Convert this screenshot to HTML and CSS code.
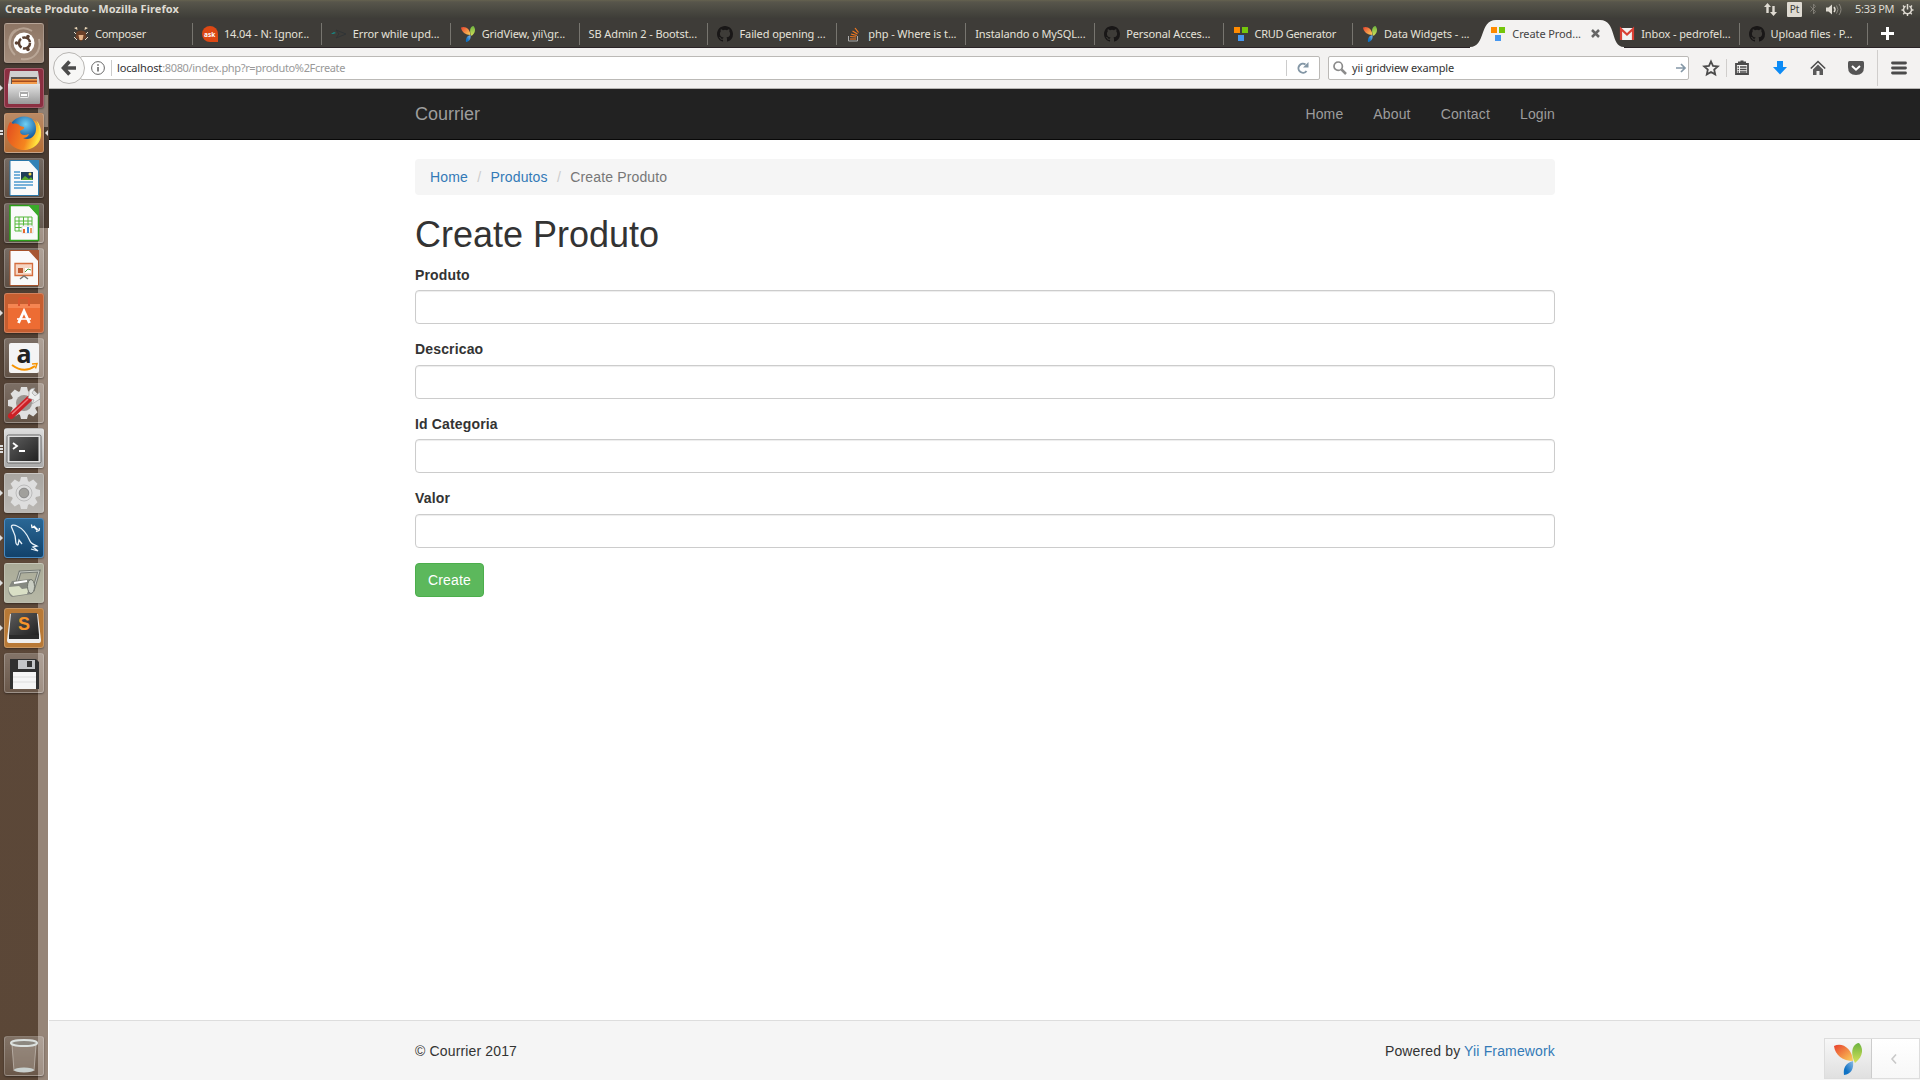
FILE: index.html
```html
<!DOCTYPE html>
<html lang="en">
<head>
<meta charset="utf-8">
<title>Create Produto</title>
<link rel="stylesheet" href="styles.css">
</head>
<body>
<svg class="defs" width="0" height="0">
  <defs>
    <linearGradient id="orange" x1="0" y1="0" x2="1" y2="1"><stop offset="0" stop-color="#e8402d"/><stop offset="1" stop-color="#fbd15b"/></linearGradient>
    <linearGradient id="green" x1="0" y1="0" x2="0" y2="1"><stop offset="0" stop-color="#6cb33f"/><stop offset="1" stop-color="#d6e25a"/></linearGradient>
    <linearGradient id="blue" x1="1" y1="0" x2="0" y2="1"><stop offset="0" stop-color="#8ebbe6"/><stop offset=".7" stop-color="#0f72c4"/></linearGradient>
    <linearGradient id="steel" x1="0" y1="0" x2="0" y2="1"><stop offset="0" stop-color="#e4e4e4"/><stop offset="1" stop-color="#999"/></linearGradient>
    <linearGradient id="screen" x1="0" y1="0" x2="1" y2="1"><stop offset="0" stop-color="#5d5d5d"/><stop offset="1" stop-color="#222"/></linearGradient>
    <radialGradient id="globe" cx=".55" cy=".25"><stop offset="0" stop-color="#6fd0f4"/><stop offset="1" stop-color="#0c4f97"/></radialGradient>
    <linearGradient id="fox" x1="0" y1="0" x2="1" y2=".3"><stop offset="0" stop-color="#e1481f"/><stop offset=".7" stop-color="#f5861f"/><stop offset="1" stop-color="#ffe13c"/></linearGradient>
  </defs>
  <symbol id="yii" viewBox="0 0 28 32">
    <path d="M0 3C8-1 18 5 19 18 9 18 1 12 0 3z" fill="url(#orange)"/>
    <path d="M21 20C16 10 18 1 25 0c5 6 4 14-4 20z" fill="url(#green)"/>
    <path d="M19 18c-8 2-10 8-9 14 7-1 10-6 9-14z" fill="url(#blue)"/>
  </symbol>
  <symbol id="github" viewBox="0 0 16 16"><path fill="#191717" d="M8 0C3.58 0 0 3.58 0 8c0 3.54 2.29 6.53 5.47 7.59.4.07.55-.17.55-.38 0-.19-.01-.82-.01-1.49-2.01.37-2.53-.49-2.69-.94-.09-.23-.48-.94-.82-1.13-.28-.15-.68-.52-.01-.53.63-.01 1.08.58 1.23.82.72 1.21 1.87.87 2.33.66.07-.52.28-.87.51-1.07-1.78-.2-3.64-.89-3.64-3.95 0-.87.31-1.59.82-2.15-.08-.2-.36-1.02.08-2.12 0 0 .67-.21 2.2.82a7.6 7.6 0 0 1 4 0c1.53-1.04 2.2-.82 2.2-.82.44 1.1.16 1.92.08 2.12.51.56.82 1.27.82 2.15 0 3.07-1.87 3.75-3.65 3.95.29.25.54.73.54 1.48 0 1.07-.01 1.93-.01 2.2 0 .21.15.46.55.38A8 8 0 0 0 16 8c0-4.42-3.58-8-8-8z"/></symbol>
  <symbol id="squares" viewBox="0 0 14 14"><path d="M0 0h6v6H0z" fill="#ff8a00"/><path d="M8 0h6v6H8z" fill="#74c60b"/><path d="M4 8h6v6H4z" fill="#4597f0"/></symbol>
  <symbol id="gear" viewBox="0 0 40 40">
    <circle cx="20" cy="20" r="12.500"/>
    <path d="M17 4h6l1.500 6h-9zM17 36h6l1.500-6h-9zM4 17v6l6 1.500v-9zM36 17v6l-6 1.500v-9zM6.500 10.800l4.300-4.300 5.200 3.200-6.300 6.300zM33.500 10.800l-4.300-4.300-5.200 3.200 6.300 6.300zM6.500 29.200l4.300 4.300 5.200-3.200-6.300-6.300zM33.500 29.200l-4.300 4.300-5.200-3.200 6.300-6.300z"/>
  </symbol>
</svg>

<header class="panel">
  <span class="panel-title">Create Produto - Mozilla Firefox</span>
  <div class="indicators">
    <svg width="13" height="13" viewBox="0 0 13 13" fill="#dfdbd2"><path d="M3.500 0L7 4H4.700v6H2.300V4H0zM9.500 13L13 9h-2.300V3H8.300v6H6z"/></svg>
    <span class="lang">Pt</span>
    <svg class="bt" width="7" height="12" viewBox="0 0 7 12" fill="none" stroke="#7e7b73"><path d="M.5 3.500l5 5-2 2.500V1l2 2.500-5 5"/></svg>
    <svg class="vol" width="16" height="13" viewBox="0 0 16 13"><path d="M0 4.500h2.500L6 1.500v10l-3.500-3H0z" fill="#dfdbd2"/><path d="M8 4q2 2.500 0 5" fill="none" stroke="#dfdbd2" stroke-width="1.500"/><path d="M10.500 2.500q3 4 0 8M13 1q4 5.500 0 11" fill="none" stroke="#8b887f"/></svg>
    <span class="clock">5:33 PM</span>
    <svg width="13" height="13" viewBox="0 0 13 13" fill="none" stroke="#dfdbd2"><path d="M4.600 3.200a4 4 0 1 0 3.800 0" stroke-width="1.500"/><path d="M6.500 1v5.500" stroke-width="1.500"/><path d="M3.400 3.900L2 2.500M9.600 3.900L11 2.500M2.500 7H.5M10.500 7h2M3.600 9.800L2.200 11.200M9.400 9.800l1.400 1.400M6.500 11v2" stroke-width="1.400"/></svg>
  </div>
</header>

<div class="desktop">
<aside class="launcher">
  <div class="tile ubuntu"><svg viewBox="0 0 40 40"><path d="M6 23C4 9 17 1 28 8M35 16c3 13-6 22-18 20M11 32C1 22 6 10 12 7" fill="none" stroke="#cdbcae" stroke-width="2" opacity=".6"/><circle cx="20" cy="20" r="10.500" fill="#fff"/><circle cx="20.500" cy="20" r="5.500" fill="none" stroke="#5b4132" stroke-width="2.500" stroke-dasharray="10 1.500"/><g fill="#5b4132"><circle cx="12.500" cy="20" r="1.800"/><circle cx="24" cy="13.500" r="1.800"/><circle cx="24" cy="26.500" r="1.800"/></g></svg></div>
  <div class="tile files on"><svg viewBox="0 0 40 40"><path d="M6 3h28l2 14H4z" fill="#d0d0d0"/><path d="M7 9h26v8H7z" fill="#5c5550"/><path d="M8 11h25v6H8z" fill="#f39b4b"/><path d="M8 12.500h25v1.500H8z" fill="#a44b1d"/><path d="M4 16h32v19q0 1-1 1H5q-1 0-1-1z" fill="url(#steel)"/><rect x="15.500" y="23.500" width="9" height="6" rx="1" fill="#aaa" stroke="#eee"/><path d="M17 26h6v2h-6z" fill="#fff"/></svg></div>
  <div class="tile firefox on two current"><svg viewBox="0 0 40 40"><circle cx="20" cy="19" r="15.500" fill="url(#globe)"/><path d="M6 9c1 0 2 1 3 2 3-1 6 0 7 2l4 1c1 2-3 3-4 4 0 4 4 5 9 3-1 3-4 4-6 4 7 3 13-2 13-9 0-4-1-7-4-10 6 3 8 8 9 14 1 10-8 17-17 17S2 30 3 20c0-4 1-8 3-11z" fill="url(#fox)"/><path d="M32 7c4 7 5 16-1 23 8-4 8-16 1-23z" fill="#ffe24b"/></svg></div>
  <div class="tile"><svg viewBox="0 0 40 40"><path d="M6 2.500h20L34.500 12v25.500H6z" fill="#fafafa" stroke="#2b77a9"/><path d="M24 2h11v12z" fill="#3182b7"/><path d="M10 14h6M10 17h6M10 20h6M10 24h19M10 27h19M10 30h12" stroke="#4d9bd0" stroke-width="1.600"/><path d="M17 14h12v8H17z" fill="#203d58"/><path d="M17 22l4-4 4 3 2-2 2 3z" fill="#5aaa30"/><circle cx="26" cy="16" r="1.500" fill="#f5d547"/></svg></div>
  <div class="tile"><svg viewBox="0 0 40 40"><path d="M6 2.500h20L34.500 12v25.500H6z" fill="#fafafa" stroke="#2ba018" stroke-width="1.500"/><path d="M24 2h11v12z" fill="#3aa92a"/><path d="M11 14h17v14H11zM11 18h17M11 21h17M11 24.500h17M15 14v14M19.500 14v14M24 14v14" fill="none" stroke="#55b83b"/><path d="M18 23h11v7H18z" fill="#fff" stroke="#ddd"/><path d="M20 30v-4" stroke="#e8672f" stroke-width="2"/><path d="M24 30v-6" stroke="#3e8edb" stroke-width="2"/><path d="M27 30v-5" stroke="#e89a64" stroke-width="2"/></svg></div>
  <div class="tile"><svg viewBox="0 0 40 40"><path d="M6 2.500h20L34.500 12v25.500H6z" fill="#fafafa" stroke="#a5512a"/><path d="M24 2h11v12z" fill="#a75631"/><path d="M11 15.500h17.500v12H11z" fill="#f6d5c3" stroke="#d46d3d" stroke-width="1.300"/><path d="M14 20h5v5h-5z" fill="#bd5b33"/><path d="M21 20h6v5h-6z" fill="#fff"/><path d="M21 24l3-3 3 1" stroke="#4d9d3d" fill="none"/><path d="M16 31l4-3 4 3" fill="none" stroke="#777" stroke-width="1.500"/></svg></div>
  <div class="tile software on"><svg viewBox="0 0 40 40"><path d="M4 11h32v25H4z" fill="#ed6c33"/><path d="M4 11h32v4H4z" fill="#f58552"/><path d="M15 13V7q0-2 2-2h6q2 0 2 2v6" fill="none" stroke="#d9542e" stroke-width="2"/><path d="M14.500 30L20 18l5.500 12" fill="none" stroke="#fff" stroke-width="2.800"/><path d="M13 26h14" stroke="#fff" stroke-width="1.600"/></svg></div>
  <div class="tile"><svg viewBox="0 0 40 40"><rect x="5" y="5" width="30" height="30" rx="2" fill="#f4f4f4"/><text x="12.500" y="25" class="amazon-a">a</text><path d="M8 27q12 9 23 1" fill="none" stroke="#f79400" stroke-width="2"/><path d="M28 26l5-.5-1.500 5" fill="none" stroke="#f79400" stroke-width="1.500"/></svg></div>
  <div class="tile"><svg viewBox="0 0 40 40"><use href="#gear" fill="#e0e0e0"/><circle cx="20" cy="20" r="8" fill="#9b9591"/><path d="M7 33L25 16" stroke="#cb2026" stroke-width="6" stroke-linecap="round"/><path d="M8 31L24 16" stroke="#ef777b" stroke-width="1.500"/><path d="M24 15l6 2-2 4 8-5V9l-5 4-3-3 3-5q-7 0-6 7z" fill="#eee" stroke="#999" stroke-width=".6"/></svg></div>
  <div class="tile light on three"><svg viewBox="0 0 40 40"><rect x="3" y="7" width="34" height="28" rx="1.500" fill="#e0e0e0" stroke="#666"/><path d="M5.500 9h29v24h-29z" fill="url(#screen)"/><path d="M9 15l4 3-4 3M15 23h6" fill="none" stroke="#fff" stroke-width="1.800"/></svg></div>
  <div class="tile silver on"><svg viewBox="0 0 40 40"><use href="#gear" fill="#dedede"/><circle cx="20" cy="20" r="8" fill="none" stroke="#bbb"/><circle cx="20" cy="20" r="4.800" fill="#a1a09c" stroke="#888"/></svg></div>
  <div class="tile mysql on"><svg viewBox="0 0 40 40"><path d="M14 27c-4 0-1-7-4-12L7.500 9C7 7 10 6.500 13 8c7 3 10 8 13 15 1 3 5 4 7 5l-4 1 5 4-7-2M14 27l1-5 3 4" fill="none" stroke="#e7f1f8" stroke-width="1.300"/><path d="M29.500 8l4 4" stroke="#fff" stroke-width="2"/><path d="M27.500 6.500l.5 3 3-.5M32 13.500l3-1 .5-2.500" stroke="#fff" stroke-width="1.300" fill="none"/></svg></div>
  <div class="tile olive on"><svg viewBox="0 0 40 40"><path d="M13 19l3-10 19-1-6 20" fill="none" stroke="#777b75" stroke-width="3"/><path d="M13 19l3-10 19-1-6 20" fill="none" stroke="#c6cac2" stroke-width="1"/><path d="M8 18l18-2q5 4 2 15L8 34q-7-5 0-16z" fill="#858881"/><path d="M5 24l10-1 3 3 7-1-2 6-14 2q-5-3-4-9z" fill="#d9dfc5"/><ellipse cx="27" cy="23.500" rx="3.500" ry="7" fill="#c9cdc2" stroke="#6f736b"/><path d="M10 20l13-2" stroke="#fff" stroke-width="2"/></svg></div>
  <div class="tile sublime on"><svg viewBox="0 0 40 40"><path d="M6 6h28l3 26q0 3-2 3H5q-2 0-2-3z" fill="#eee"/><path d="M7 5h26l2 22H5z" fill="url(#screen)"/><path d="M5 27h30v4H5z" fill="#2b2b2b"/><text x="14" y="22" class="sublime-s">S</text></svg></div>
  <div class="tile"><svg viewBox="0 0 40 40"><path d="M6 6h26l3 3v27H6z" fill="#303030"/><path d="M14 7h17v9H14z" fill="#c4c6c8"/><path d="M23 8h5v6h-5z" fill="#353535"/><path d="M9 19h23v17H9z" fill="#f5f5f5"/><path d="M9 24h23M9 29h23" stroke="#ddd"/></svg></div>
  <div class="tile trash"><svg viewBox="0 0 40 40"><path d="M8 9l2 26h20l2-26z" fill="#c9c0b7" opacity=".3"/><path d="M8 9l2 26M32 9l-2 26" stroke="#d3ccc5" opacity=".6"/><ellipse cx="20" cy="34" rx="10" ry="2.500" fill="#c9d0ce"/><ellipse cx="20" cy="7" rx="13" ry="3" fill="#8d8880" stroke="#dce1df" stroke-width="2"/></svg></div>
</aside>

<main class="window">
  <nav class="tabs">
    <div class="tab"><svg class="fav" viewBox="0 0 16 16"><path d="M3.500 6q4.500-3 9 0l1 6-2.500 1-3 2.500L5 13l-2.500-1z" fill="#6b4028"/><path d="M5.500 9h5l-1 5h-3z" fill="#e3b186"/><path d="M1 2l3-1 .5 3zM15 2l-3-1-.5 3z" fill="#efd9ba"/><path d="M1 6l2 2M15 6l-2 2M1 11l3 3M15 11l-3 3" stroke="#e9dccb"/></svg><span>Composer</span></div>
    <div class="tab"><svg class="fav" viewBox="0 0 16 16"><path d="M8 0a8 8 0 0 1 8 8v8H8A8 8 0 0 1 8 0z" fill="#dd4814"/><text x="2" y="10.500" class="ask">ask</text></svg><span>14.04 - N: Ignor...</span></div>
    <div class="tab"><svg class="fav" viewBox="0 0 16 16"><path d="M0 8l3-2 2 1-3 1z" fill="#168b88"/><path d="M5 4l10 4-10 4 3-4z" fill="none" stroke="#303436"/></svg><span>Error while upd...</span></div>
    <div class="tab"><svg class="fav"><use href="#yii"/></svg><span>GridView, yii\gr...</span></div>
    <div class="tab"><span>SB Admin 2 - Bootst...</span></div>
    <div class="tab"><svg class="fav"><use href="#github"/></svg><span>Failed opening ...</span></div>
    <div class="tab"><svg class="fav" viewBox="0 0 16 16" fill="none"><path d="M2.500 10v5h9v-5" stroke="#aaa"/><path d="M4 13h6M4.200 10.500l6 .5M5 8l5.800 1.500M6.500 5l5 3M9 2l3.500 4.500" stroke="#f47920" stroke-width="1.200"/></svg><span>php - Where is t...</span></div>
    <div class="tab"><span>Instalando o MySQL...</span></div>
    <div class="tab"><svg class="fav"><use href="#github"/></svg><span>Personal Acces...</span></div>
    <div class="tab"><svg class="fav sq"><use href="#squares"/></svg><span class="tight">CRUD Generator</span></div>
    <div class="tab last"><svg class="fav"><use href="#yii"/></svg><span>Data Widgets - ...</span></div>
    <div class="tab active"><svg class="shape" width="154" height="29" viewBox="0 0 154 29"><path d="M0 28C16 28 9 1 26 1H130C147 1 140 28 154 28V29H0z" fill="#f3f2f1"/></svg><svg class="fav sq"><use href="#squares"/></svg><span>Create Prod...</span><svg class="close" width="9" height="9" viewBox="0 0 9 9"><path d="M1 1l7 7M8 1L1 8" stroke="#666" stroke-width="2.500"/></svg></div>
    <div class="tab"><svg class="fav sq" viewBox="0 0 14 14"><path d="M0 1h14v12H0z" fill="#f1f1f1"/><path d="M1 13V2l6 5.500L13 2v11" fill="none" stroke="#d93f34" stroke-width="2.200"/></svg><span>Inbox - pedrofel...</span></div>
    <div class="tab"><svg class="fav"><use href="#github"/></svg><span>Upload files · P...</span></div>
    <svg class="plus" width="13" height="13" viewBox="0 0 13 13"><path d="M6.500 0v13M0 6.500h13" stroke="#fff" stroke-width="3"/></svg>
  </nav>

  <div class="toolbar">
    <div class="back"><svg width="16" height="16" viewBox="0 0 16 16"><path d="M8.500 1.500L2.500 8l6 6.500M3 8h12" fill="none" stroke="#4b4b4b" stroke-width="3.600"/></svg></div>
    <div class="url">
      <svg class="info" width="14" height="14" viewBox="0 0 14 14" fill="none" stroke="#666"><circle cx="7" cy="7" r="6.400"/><path d="M7 6v4.500M7 3.200v1.600" stroke-width="1.600"/></svg>
      <span class="address"><b>localhost</b>:8080/index.php?r=produto%2Fcreate</span>
      <div class="reload"><svg width="12" height="12" viewBox="0 0 12 12"><path d="M9.500 9A4.500 4.500 0 1 1 8.500 2.500" fill="none" stroke="#8497a6" stroke-width="2"/><path d="M11.500 0v5.500H6z" fill="#8497a6"/></svg></div>
    </div>
    <div class="search">
      <svg width="14" height="14" viewBox="0 0 14 14" fill="none" stroke="#8b8b8b"><circle cx="5.200" cy="5.200" r="4.200" stroke-width="1.700"/><path d="M8.500 8.500l4.500 4.500" stroke-width="2.500"/></svg>
      <span>yii gridview example</span>
      <svg class="go" width="10" height="10" viewBox="0 0 10 10"><path d="M0 5h8M5 1l4 4-4 4" fill="none" stroke="#8497a6" stroke-width="1.700"/></svg>
    </div>
    <div class="tools">
      <svg width="16" height="16" viewBox="0 0 16 16"><path d="M8 1.500l2 4.400 4.800.5-3.600 3.200 1 4.800L8 12l-4.200 2.400 1-4.800L1.200 6.400 6 5.900z" fill="none" stroke="#4b4b4b" stroke-width="1.800"/></svg>
      <i class="rule short"></i>
      <svg width="16" height="16" viewBox="0 0 16 16"><path d="M2 4h12v10H2z" fill="none" stroke="#4b4b4b" stroke-width="1.800"/><path d="M4 3h8V1.500H9.500V.5h-3v1H4zM3.500 6.200H5v1.500H3.500zM3.500 8.700H5v1.500H3.500zM3.500 11.200H5v1.500H3.500zM6 6.200h6.500v1.500H6zM6 8.700h6.500v1.500H6zM6 11.200h6.500v1.500H6z" fill="#4b4b4b"/></svg>
      <svg width="16" height="16" viewBox="0 0 16 16"><path d="M5 1h6v6h4l-7 7.500L1 7h4z" fill="#0c8bf5"/></svg>
      <svg width="16" height="16" viewBox="0 0 16 16"><path d="M.8 8.500L8 1.500l7.200 7" fill="none" stroke="#4b4b4b" stroke-width="1.600"/><path d="M3 9.500l5-5 5 5V15H9.500v-4h-3v4H3z" fill="#5a5a5a"/></svg>
      <svg width="16" height="16" viewBox="0 0 16 16"><path d="M1.500 1h13Q16 1 16 2.500V7q0 8-8 8T0 7V2.500Q0 1 1.500 1z" fill="#555"/><path d="M4 6l4 3.700L12 6" fill="none" stroke="#fff" stroke-width="2"/></svg>
      <i class="rule tall"></i>
      <svg width="16" height="16" viewBox="0 0 16 16"><path d="M1.500 3h13M1.500 8h13M1.500 13h13" stroke="#4b4b4b" stroke-width="2.800" stroke-linecap="round"/></svg>
    </div>
  </div>

  <div class="page">
    <header class="navbar"><div class="container nav-row">
      <a class="brand">Courrier</a>
      <nav class="links"><a>Home</a><a>About</a><a>Contact</a><a>Login</a></nav>
    </div></header>
    <section class="container content">
      <div class="breadcrumb"><a>Home</a><i>/</i><a>Produtos</a><i>/</i><span>Create Produto</span></div>
      <h1>Create Produto</h1>
      <form>
        <div class="group"><label for="f1">Produto</label><input id="f1" type="text"></div>
        <div class="group"><label for="f2">Descricao</label><input id="f2" type="text"></div>
        <div class="group"><label for="f3">Id Categoria</label><input id="f3" type="text"></div>
        <div class="group"><label for="f4">Valor</label><input id="f4" type="text"></div>
        <button type="button" class="create">Create</button>
      </form>
    </section>
    <footer class="footer"><div class="container foot-row"><span>© Courrier 2017</span><span>Powered by <a>Yii Framework</a></span></div></footer>
    <div class="debug">
      <div class="debug-logo"><svg width="28" height="32"><use href="#yii"/></svg></div>
      <div class="debug-toggle"><svg width="6" height="10" viewBox="0 0 6 10"><path d="M5 0.500L1 5l4 4.500" fill="none" stroke="#c9c9c9" stroke-width="1.600"/></svg></div>
    </div>
  </div>
</main>
</div>
</body>
</html>
```
FILE: styles.css
```css
* { box-sizing: border-box; }
body {
  margin: 0;
  width: 1920px;
  height: 1080px;
  overflow: hidden;
  display: flex;
  flex-direction: column;
  font-family: "Liberation Sans", Arial, sans-serif;
  font-size: 14px;
  line-height: 20px;
  color: #333;
  background: #fff;
}
svg { display: block; flex: none; overflow: visible; }
.defs { position: absolute; }

/* Top system panel */
.panel {
  height: 18px;
  flex: none;
  display: flex;
  justify-content: space-between;
  align-items: center;
  padding: 0 6px 0 5px;
  background: linear-gradient(#65624f 0, #57554b 2px, #3e3d38 18px);
  color: #dfdbd2;
  font: 11.5px/18px "Noto Sans", sans-serif;
}
.panel-title { font-weight: 700; font-size: 11px; letter-spacing: .05px; }
.indicators { display: flex; align-items: center; height: 16px; }
.lang {
  width: 15px;
  height: 15px;
  margin: 0 8px 0 10px;
  border-radius: 1px;
  background: #dfdbd2;
  color: #3e3d38;
  font: 10px/15px "Noto Sans", sans-serif;
  text-align: center;
}
.vol { margin: 0 13px 0 9px; }
.clock { width: 39px; margin-right: 7px; white-space: nowrap; font-size: 11px; letter-spacing: -.3px; }

.desktop { flex: 1; display: flex; min-height: 0; }

/* Application launcher */
.launcher {
  width: 49px;
  flex: none;
  display: flex;
  flex-direction: column;
  gap: 5px;
  padding: 5px 0 4px 4px;
  background:
    linear-gradient(#3e3c38 0 30px, #4b3c31 30px 210px, #fff 210px) 48px 0 / 1px 100% no-repeat,
    linear-gradient(#fff0 0 77px, #8f8074 77px 109px, #fff0 109px 210px, #968578 210px) 38px 0 / 10px 100% no-repeat,
    linear-gradient(#463b33 0, #4b3c31 210px, #5c4839 50%, #5b4737 100%);
}
.tile {
  position: relative;
  width: 40px;
  height: 40px;
  flex: none;
  border-radius: 3px;
  border: 1px solid #ffffff38;
  background: linear-gradient(#ffffff3d, #ffffff18);
  box-shadow: 0 1px 2px #0006;
}
.tile svg { width: 40px; height: 40px; margin: -1px; }
.tile.trash { margin-top: auto; }
.ubuntu { background: linear-gradient(#8d7564, #a38c7b); }
.files { background: #8b2f41; }
.firefox { background: linear-gradient(#b98a66, #b56d35); }
.software { background: #c65e30; }
.light { background: linear-gradient(#ddd, #aaa); }
.silver { background: linear-gradient(#a9a6a1, #bab7b3); }
.mysql { background: linear-gradient(#2a6795, #12426b); border-color: #4a8bc2; }
.olive { background: linear-gradient(#aaab98, #b7b8a6); }
.sublime { background: #b87936; }
.on::before {
  content: "";
  position: absolute;
  left: -5px;
  top: 16px;
  border: 3px solid transparent;
  border-left-color: #ddd;
  border-right: 0;
}
.two::before, .three::before { border: 0; width: 3px; height: 5px; background: linear-gradient(#ddd 0 2px, #0000 2px 3px, #ddd 3px); }
.three::before { height: 8px; background: linear-gradient(#ddd 0 2px, #0000 2px 3px, #ddd 3px 5px, #0000 5px 6px, #ddd 6px); }
.current::after {
  content: "";
  position: absolute;
  right: -5px;
  top: 16px;
  border: 3px solid transparent;
  border-right-color: #ddd;
  border-left: 0;
}
.amazon-a { font: 700 25px "Noto Sans", sans-serif; fill: #222; }
.sublime-s { font: 700 18px "Liberation Sans", sans-serif; fill: #f7942a; }
.ask { font: 700 6.500px "Noto Sans", sans-serif; fill: #fff; }

/* Browser window */
.window { width: 1871px; display: flex; flex-direction: column; }
.tabs {
  height: 30px;
  flex: none;
  display: flex;
  align-items: flex-start;
  padding: 1px 0 0 15px;
  border-bottom: 1px solid #2a2326;
  background: #3e3c38;
  font: 11px/29px "Noto Sans", sans-serif;
  color: #e5e2da;
}
.tab {
  position: relative;
  width: 128.9px;
  height: 29px;
  flex: none;
  display: flex;
  align-items: center;
  gap: 6px;
  padding-left: 9px;
  white-space: nowrap;
}
.tab::after {
  content: "";
  position: absolute;
  right: 0;
  top: 4px;
  width: 1px;
  height: 22px;
  background: #77756f;
}
.tab.last::after, .tab.active::after { display: none; }
.tab span { letter-spacing: -.1px; }
.tab .tight, .tab:first-child span { letter-spacing: -.3px; }
.fav { width: 16px; height: 16px; }
.fav.sq { width: 14px; height: 14px; margin: 0 1px 0 .5px; }
.tab.active { color: #444; z-index: 1; }
.active > * { position: relative; }
.active .shape { position: absolute; left: -12px; top: 0; }
.active .close { position: absolute; left: 109px; top: 10px; }
.plus { margin: 8px 0 0 13px; }

.toolbar {
  height: 41px;
  flex: none;
  display: flex;
  align-items: center;
  padding-left: 4px;
  background: #f3f2f1;
  border-bottom: 1px solid #b6b5b3;
  font: 11px/22px "Noto Sans", sans-serif;
}
.back {
  width: 32px;
  height: 32px;
  display: grid;
  place-items: center;
  border: 1px solid #b8b6b3;
  border-radius: 50%;
  background: #f7f7f6;
  z-index: 1;
}
.url, .search {
  height: 24px;
  display: flex;
  align-items: center;
  border: 1px solid #bbb9b6;
  border-radius: 2px;
  background: #fff;
}
.url { width: 1240px; margin-left: -5px; padding-left: 10px; }
.address {
  height: 16px;
  line-height: 15px;
  margin-left: 6px;
  padding-left: 5px;
  border-left: 1px solid #ccc;
  color: #999;
  letter-spacing: -.34px;
}
.address b { font-weight: 400; color: #333; letter-spacing: -.15px; }
.reload { margin-left: auto; width: 33px; height: 16px; padding: 2px 0 0 10px; border-left: 1px solid #ccc; }
.search { width: 361px; margin-left: 8px; padding: 0 2px 0 4px; gap: 5px; color: #333; letter-spacing: -.15px; }
.go { margin-left: auto; }
.tools { flex: 1; height: 40px; display: flex; align-items: center; padding-left: 14px; }
.tools > svg + svg { margin-left: 22px; }
.rule { width: 1px; background: #d0cecc; }
.short { height: 18px; margin: 0 7px; }
.tall { height: 36px; margin: 0 13px 0 13px; }

/* Page */
.page {
  position: relative;
  flex: 1;
  display: flex;
  flex-direction: column;
  background: #fff;
  letter-spacing: .15px;
}
.page a { color: #337ab7; }
.container { width: 1140px; margin: 0 auto 0 366px; }
.navbar { height: 51px; flex: none; background: #222; border-bottom: 1px solid #080808; }
.nav-row, .foot-row { display: flex; justify-content: space-between; }
.page .navbar a { color: #9d9d9d; padding: 15px 0; }
.navbar .brand { font-size: 18px; letter-spacing: 0; }
.links { display: flex; gap: 30px; }
.content { flex: 1; padding-top: 19px; }
.breadcrumb {
  height: 36px;
  padding: 8px 15px;
  display: flex;
  border-radius: 4px;
  background: #f5f5f5;
}
.breadcrumb i { width: 22.500px; text-align: center; font-style: normal; color: #ccc; }
.breadcrumb span { color: #777; }
h1 { margin: 20.400px 0 9.900px; font-size: 36px; line-height: 39.600px; font-weight: 500; letter-spacing: 0; }
.group { height: 74.500px; }
label { display: block; margin-bottom: 5.200px; font-weight: 700; }
input {
  display: block;
  width: 100%;
  height: 34px;
  border: 1px solid #ccc;
  border-radius: 4px;
  background: #fff;
  box-shadow: inset 0 1px 1px #00000013;
}
.create {
  display: block;
  height: 34px;
  padding: 0 12px;
  border: 1px solid #4cae4c;
  border-radius: 4px;
  background: #5cb85c;
  color: #fff;
  font: 14px/20px "Liberation Sans", Arial, sans-serif;
  letter-spacing: .15px;
}
.footer { height: 60px; flex: none; padding-top: 20px; border-top: 1px solid #ddd; background: #f5f5f5; }
.debug {
  position: absolute;
  right: 0;
  bottom: 1px;
  width: 96px;
  height: 41px;
  display: flex;
  border: 1px solid #ddd;
}
.debug-logo { width: 47px; display: grid; place-items: center; border-right: 1px solid #ccc; background: linear-gradient(#f7f7f7, #e0e0e0); }
.debug-toggle { flex: 1; display: grid; place-items: center; padding-right: 3px; background: linear-gradient(#fff, #f7f7f7); }
```
